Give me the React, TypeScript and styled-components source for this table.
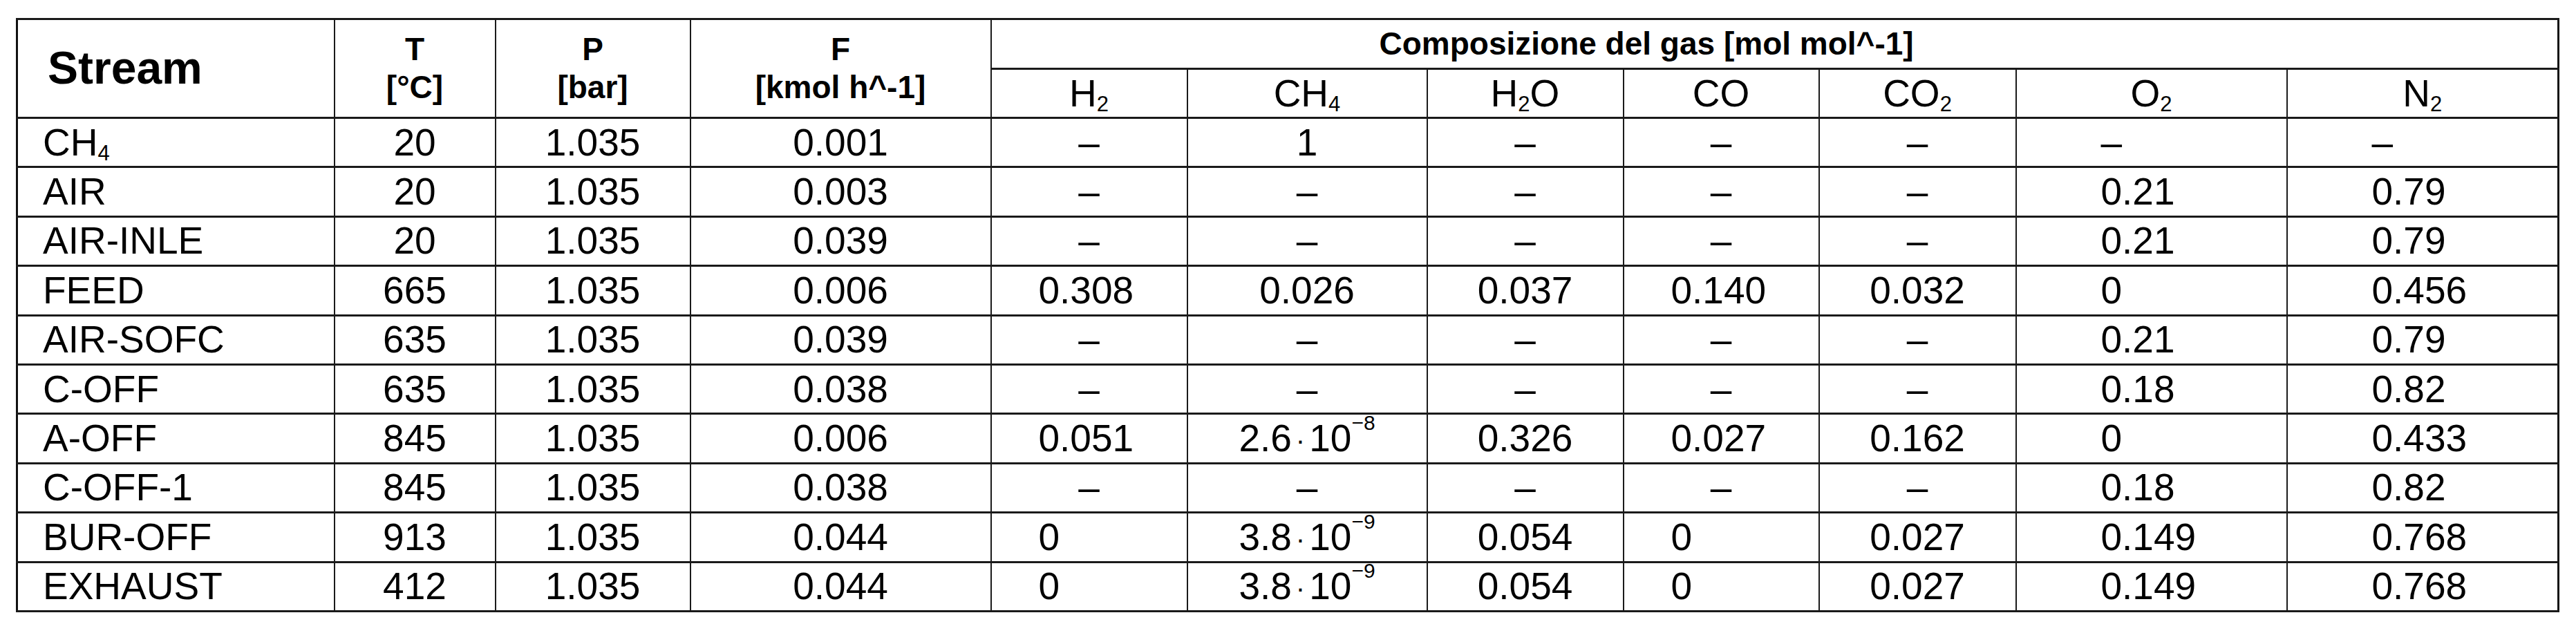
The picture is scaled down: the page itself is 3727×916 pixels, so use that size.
import React from 'react';
import styled, { createGlobalStyle } from 'styled-components';

const GlobalStyle = createGlobalStyle`
  html, body {
    margin: 0;
    padding: 0;
    background: #fff;
  }
  body {
    font-family: 'Liberation Sans', Arial, Helvetica, sans-serif;
    color: #000;
  }
`;

type Align = 'center' | 'mixed' | 'left';

interface ColumnDef {
  width: number;
  align: Align;
  pad?: number;
}

// widths measured from the reference grid lines
const columns: ColumnDef[] = [
  { width: 459, align: 'left', pad: 36 },
  { width: 233, align: 'center' },
  { width: 282, align: 'center' },
  { width: 435, align: 'center' },
  { width: 284, align: 'mixed', pad: 68 },
  { width: 347, align: 'center' },
  { width: 284, align: 'center' },
  { width: 283, align: 'mixed', pad: 68 },
  { width: 285, align: 'center' },
  { width: 392, align: 'left', pad: 122 },
  { width: 393, align: 'left', pad: 122 },
];

type Sci = { m: string; e: string };
type Value = string | Sci;

interface StreamRow {
  name: string;
  sub?: string;
  values: Value[];
}

const DASH = '–';

const rows: StreamRow[] = [
  { name: 'CH', sub: '4', values: ['20', '1.035', '0.001', DASH, '1', DASH, DASH, DASH, DASH, DASH] },
  { name: 'AIR', values: ['20', '1.035', '0.003', DASH, DASH, DASH, DASH, DASH, '0.21', '0.79'] },
  { name: 'AIR-INLE', values: ['20', '1.035', '0.039', DASH, DASH, DASH, DASH, DASH, '0.21', '0.79'] },
  { name: 'FEED', values: ['665', '1.035', '0.006', '0.308', '0.026', '0.037', '0.140', '0.032', '0', '0.456'] },
  { name: 'AIR-SOFC', values: ['635', '1.035', '0.039', DASH, DASH, DASH, DASH, DASH, '0.21', '0.79'] },
  { name: 'C-OFF', values: ['635', '1.035', '0.038', DASH, DASH, DASH, DASH, DASH, '0.18', '0.82'] },
  { name: 'A-OFF', values: ['845', '1.035', '0.006', '0.051', { m: '2.6', e: '8' }, '0.326', '0.027', '0.162', '0', '0.433'] },
  { name: 'C-OFF-1', values: ['845', '1.035', '0.038', DASH, DASH, DASH, DASH, DASH, '0.18', '0.82'] },
  { name: 'BUR-OFF', values: ['913', '1.035', '0.044', '0', { m: '3.8', e: '9' }, '0.054', '0', '0.027', '0.149', '0.768'] },
  { name: 'EXHAUST', values: ['412', '1.035', '0.044', '0', { m: '3.8', e: '9' }, '0.054', '0', '0.027', '0.149', '0.768'] },
];

const Page = styled.div`
  padding: 26px 0 0 23px;
`;

const Table = styled.table`
  border-collapse: collapse;
  table-layout: fixed;
  width: 3678px;
  border: 3px solid #111;
`;

const HeadRow = styled.tr<{ $h: number }>`
  height: ${({ $h }) => $h}px;
`;

const BodyRow = styled.tr`
  height: 71.4px;
`;

const HeadCell = styled.th<{ $size: number; $bold?: boolean; $left?: number }>`
  border: 3px solid #1a1a1a;
  border-left-width: 2px;
  border-right-width: 2px;
  padding: 0 0 0 ${({ $left }) => $left ?? 0}px;
  text-align: ${({ $left }) => ($left !== undefined ? 'left' : 'center')};
  vertical-align: middle;
  font-size: ${({ $size }) => $size}px;
  font-weight: ${({ $bold }) => ($bold ? 700 : 400)};
  line-height: 1.2;
  white-space: nowrap;
`;

const Cell = styled.td<{ $align: 'center' | 'left'; $pad: number }>`
  border: 3px solid #1a1a1a;
  border-left-width: 2px;
  border-right-width: 2px;
  padding: 0 0 0 ${({ $pad }) => $pad}px;
  text-align: ${({ $align }) => $align};
  vertical-align: middle;
  font-size: 55px;
  line-height: 1;
  white-space: nowrap;
  overflow: visible;
`;

const Sub = styled.span`
  font-size: 31px;
  vertical-align: -7px;
  line-height: 0;
`;

const Sup = styled.span`
  font-size: 30px;
  vertical-align: 31px;
  line-height: 0;
`;

const Dot = styled.span`
  display: inline-block;
  margin: 0 6px;
  font-size: 40px;
  line-height: 0;
  vertical-align: 2px;
`;

const Formula: React.FC<{ base: string; sub?: string; tail?: string }> = ({ base, sub, tail }) => (
  <>
    {base}
    {sub && <Sub>{sub}</Sub>}
    {tail}
  </>
);

const renderValue = (v: Value) =>
  typeof v === 'string' ? (
    v
  ) : (
    <>
      {v.m}
      <Dot>·</Dot>
      10
      <Sup>−{v.e}</Sup>
    </>
  );

const cellProps = (colIndex: number, v: Value) => {
  const col = columns[colIndex];
  if (col.align === 'center') return { $align: 'center' as const, $pad: 0 };
  if (col.align === 'mixed' && v === DASH) return { $align: 'center' as const, $pad: 0 };
  return { $align: 'left' as const, $pad: col.pad ?? 0 };
};

export default function App() {
  return (
    <>
      <GlobalStyle />
      <Page>
        <Table>
          <colgroup>
            {columns.map((c, i) => (
              <col key={i} style={{ width: c.width }} />
            ))}
          </colgroup>
          <thead>
            <HeadRow $h={72}>
              <HeadCell rowSpan={2} $size={66} $bold $left={43}>
                Stream
              </HeadCell>
              <HeadCell rowSpan={2} $size={46} $bold>
                T<br />[°C]
              </HeadCell>
              <HeadCell rowSpan={2} $size={46} $bold>
                P<br />[bar]
              </HeadCell>
              <HeadCell rowSpan={2} $size={46} $bold>
                F<br />[kmol h^-1]
              </HeadCell>
              <HeadCell colSpan={7} $size={46} $bold $left={561}>
                Composizione del gas [mol mol^-1]
              </HeadCell>
            </HeadRow>
            <HeadRow $h={71}>
              <HeadCell $size={55}><Formula base="H" sub="2" /></HeadCell>
              <HeadCell $size={55}><Formula base="CH" sub="4" /></HeadCell>
              <HeadCell $size={55}><Formula base="H" sub="2" tail="O" /></HeadCell>
              <HeadCell $size={55}><Formula base="CO" /></HeadCell>
              <HeadCell $size={55}><Formula base="CO" sub="2" /></HeadCell>
              <HeadCell $size={55}><Formula base="O" sub="2" /></HeadCell>
              <HeadCell $size={55}><Formula base="N" sub="2" /></HeadCell>
            </HeadRow>
          </thead>
          <tbody>
            {rows.map((r, ri) => (
              <BodyRow key={ri}>
                <Cell $align="left" $pad={columns[0].pad ?? 0}>
                  <Formula base={r.name} sub={r.sub} />
                </Cell>
                {r.values.map((v, vi) => (
                  <Cell key={vi} {...cellProps(vi + 1, v)}>
                    {renderValue(v)}
                  </Cell>
                ))}
              </BodyRow>
            ))}
          </tbody>
        </Table>
      </Page>
    </>
  );
}
